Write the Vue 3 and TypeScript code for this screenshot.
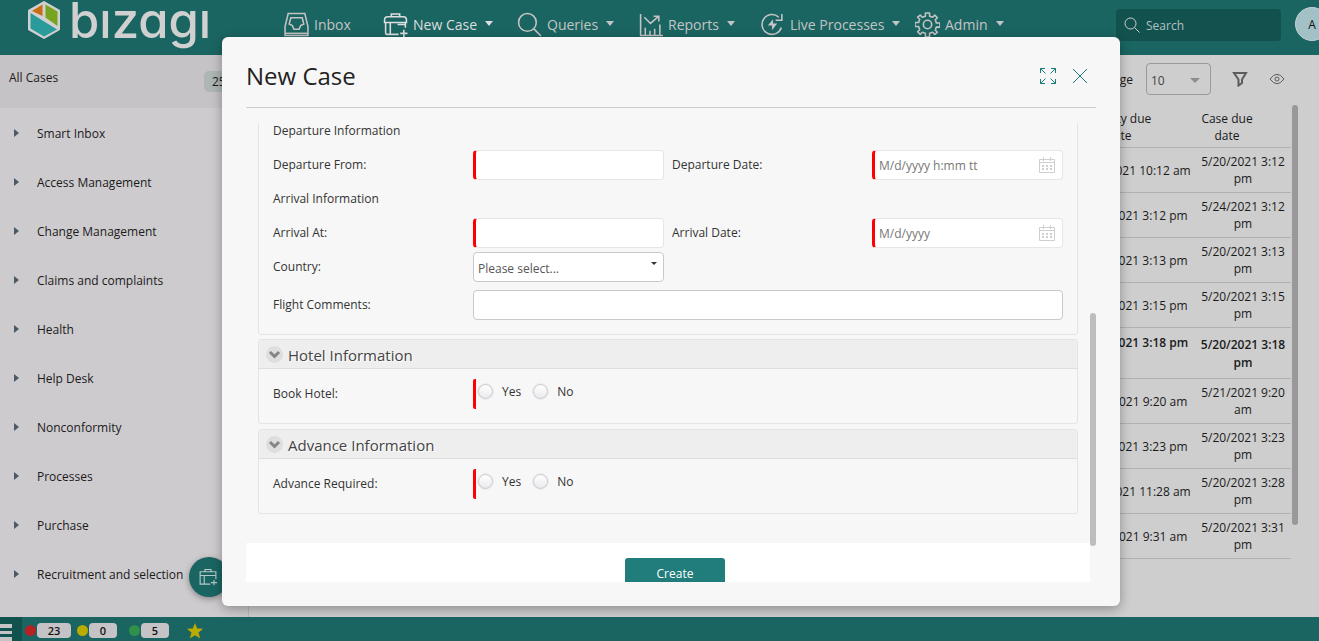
<script setup lang="ts">
import { ref } from 'vue'

interface NavItem { label: string; icon: string; menu: boolean; active?: boolean }
interface CaseRow { activity: string; date: string; strong?: boolean }

const nav: NavItem[] = [
  { label: 'Inbox', icon: 'inbox', menu: false },
  { label: 'New Case', icon: 'case', menu: true, active: true },
  { label: 'Queries', icon: 'search', menu: true },
  { label: 'Reports', icon: 'chart', menu: true },
  { label: 'Live Processes', icon: 'live', menu: true },
  { label: 'Admin', icon: 'gear', menu: true },
]

const categories = [
  'Smart Inbox', 'Access Management', 'Change Management', 'Claims and complaints', 'Health',
  'Help Desk', 'Nonconformity', 'Processes', 'Purchase', 'Recruitment and selection',
]

const rows: CaseRow[] = [
  { activity: '5/19/2021 10:12 am', date: '5/20/2021 3:12 pm' },
  { activity: '5/20/2021 3:12 pm', date: '5/24/2021 3:12 pm' },
  { activity: '5/20/2021 3:13 pm', date: '5/20/2021 3:13 pm' },
  { activity: '5/20/2021 3:15 pm', date: '5/20/2021 3:15 pm' },
  { activity: '5/20/2021 3:18 pm', date: '5/20/2021 3:18 pm', strong: true },
  { activity: '5/21/2021 9:20 am', date: '5/21/2021 9:20 am' },
  { activity: '5/20/2021 3:23 pm', date: '5/20/2021 3:23 pm' },
  { activity: '5/20/2021 11:28 am', date: '5/20/2021 3:28 pm' },
  { activity: '5/20/2021 9:31 am', date: '5/20/2021 3:31 pm' },
]

const counters = [
  { color: 'red', count: 23 },
  { color: 'yellow', count: 0 },
  { color: 'green', count: 5 },
]

const questions = [
  { title: 'Hotel Information', label: 'Book Hotel:', name: 'hotel' },
  { title: 'Advance Information', label: 'Advance Required:', name: 'advance' },
]

const answers = ref<Record<string, string>>({ hotel: '', advance: '' })
const departureFrom = ref('')
const departureDate = ref('')
const arrivalAt = ref('')
const arrivalDate = ref('')
const country = ref('')
const comments = ref('')
</script>

<template>
  <div class="page">
    <header class="topbar">
      <div class="brand">
        <svg class="brand-mark" viewBox="0 0 34 40" aria-hidden="true">
          <path d="M17 2 32 10.500V29.500L17 38 2 29.500V10.500Z" fill="#d0d0d0" stroke="#d0d0d0" stroke-width="2" stroke-linejoin="round" />
          <path d="M15.500 4.500V16L5 11Z" fill="#c96c13" />
          <path d="M18.500 4.500 30.500 11.500V26L18.500 17.500Z" fill="#76a41f" />
          <path d="M3.500 13 30 29.500 17 36.500 3.500 28.500Z" fill="#2a9a9b" />
        </svg>
        <span class="brand-name" aria-label="bizagi">bızagı</span>
      </div>
      <nav class="nav">
        <a v-for="item in nav" :key="item.label" href="#" class="nav-item" :class="{ active: item.active }">
          <svg class="nav-icon" viewBox="0 0 24 24" aria-hidden="true">
            <template v-if="item.icon === 'inbox'">
              <path d="M4 1.500h16l3 12.500v8.500H1V14Z" />
              <path d="M6.500 5.500h11l1.500 6-3 1.500-1.500 3.500h-5L8 13l-3-1.500Z" />
              <path d="M1 20.500h22" />
            </template>
            <template v-else-if="item.icon === 'case'">
              <path d="M15 21.500H3.500Q2.500 21.500 2.500 19.500V10M21.500 10v5M1.500 10h21V7.500Q22.500 4.500 19.500 4.500h-15Q1.500 4.500 1.500 7.500ZM7 10v11.500M8 4.500V2h8v2.500M14 12h7" />
              <path d="M20 17v7M16.500 20.500h7" />
            </template>
            <template v-else-if="item.icon === 'search'">
              <circle cx="10" cy="10" r="8.500" />
              <path d="m16 16 7 7" />
            </template>
            <template v-else-if="item.icon === 'chart'">
              <path d="M2.500 2v20.500H24M6 5l6 6 8-7M15 4h5v5M7 22v-7M11.500 22v-4M16 22v-6M21 22V12" />
            </template>
            <template v-else-if="item.icon === 'live'">
              <path d="M18 5A9.500 9.500 0 1 0 20.500 15M21 2v6h-6" />
              <path d="M12.500 7 7.500 13h4v4.500l5-6.500h-4Z" fill="currentColor" stroke="none" />
            </template>
            <template v-else>
              <circle cx="12" cy="12" r="4" />
              <path d="M10 1h4v3l3 1 2-2 2.500 2.500-2 2 1 3H24v4h-3.500l-1 3 2 2L19 21.500l-2-2-3 1V24h-4v-3.500l-3-1-2 2L2.500 19l2-2-1-3H0v-4h3.500l1-3-2-2L5 3l2 2 3-1Z" stroke-linejoin="round" />
            </template>
          </svg>
          <span>{{ item.label }}</span>
          <i v-if="item.menu" class="caret"></i>
        </a>
      </nav>
      <label class="search">
        <svg viewBox="0 0 16 16" aria-hidden="true"><circle cx="6.500" cy="6.500" r="5.500" /><path d="m10.500 10.500 5 5" /></svg>
        <input type="search" placeholder="Search" aria-label="Search" />
      </label>
      <button class="avatar" type="button">A</button>
    </header>

    <div class="content">
      <aside class="sidebar">
        <div class="sidebar-head"><span>All Cases</span><span class="badge">25</span></div>
        <ul class="categories">
          <li v-for="name in categories" :key="name"><a href="#"><i class="arrow"></i>{{ name }}</a></li>
        </ul>
      </aside>
      <main class="main">
        <div class="toolbar">
          <label for="page-size">Cases per page</label>
          <span class="size-box">
            <select id="page-size"><option>10</option></select>
            <i class="caret"></i>
          </span>
          <button class="tool" type="button" aria-label="Filter">
            <svg viewBox="0 0 16 16"><path d="M2 2h12L10 8.500V12l-3.500 2.500v-6Z" stroke-width="2" /></svg>
          </button>
          <button class="tool" type="button" aria-label="View">
            <svg viewBox="0 0 16 16"><path d="M1 8q7-9.500 14 0Q8 17.500 1 8Z" /><circle cx="8" cy="8" r="2" /></svg>
          </button>
        </div>
        <div class="table-wrap">
          <table class="cases">
            <thead><tr><th class="col-activity">Activity due date</th><th class="col-date">Case due date</th></tr></thead>
            <tbody>
              <tr v-for="row in rows" :key="row.date + row.activity" :class="{ strong: row.strong }">
                <td>{{ row.activity }}</td><td>{{ row.date }}</td>
              </tr>
            </tbody>
          </table>
          <div class="page-thumb"></div>
        </div>
      </main>
    </div>

    <footer class="status">
      <button class="menu" type="button" aria-label="Menu"><i></i><i></i><i></i></button>
      <span v-for="c in counters" :key="c.color" class="counter">
        <i class="dot" :class="c.color"></i><b>{{ c.count }}</b>
      </span>
      <svg class="star" viewBox="0 0 18 18" aria-hidden="true"><path d="m9 1 2.200 5.500 6 .3-4.700 3.700 1.700 6L9 13.300l-5.200 3.200 1.700-6L.8 6.800l6-.3Z" /></svg>
    </footer>

    <button class="fab" type="button" aria-label="New case">
      <svg viewBox="0 0 24 24"><path d="M15 21.500H1.500V5h21v10M1.500 10h21M7 10v11.500M8 5V2h8v3M20 16v7M16 19.500h8" /></svg>
    </button>

    <section class="dialog" role="dialog" aria-labelledby="dialog-title">
      <header class="dialog-head">
        <h1 id="dialog-title">New Case</h1>
        <button type="button" aria-label="Maximize">
          <svg viewBox="0 0 16 16"><path d="M.5 5V.5H5M.5.5l5 5M11 .5h4.500V5M15.500.5l-5 5M.5 11v4.500H5M.5 15.500l5-5M11 15.500h4.500V11M15.500 15.500l-5-5" /></svg>
        </button>
        <button type="button" aria-label="Close">
          <svg viewBox="0 0 16 16"><path d="m1 1 14 14M15 1 1 15" /></svg>
        </button>
      </header>
      <div class="dialog-body">
        <form class="form" @submit.prevent>
          <fieldset class="group flight">
            <h2 class="subtitle">Departure Information</h2>
            <div class="pair">
              <div class="field">
                <label for="dep-from">Departure From:</label>
                <input id="dep-from" v-model="departureFrom" class="box required" type="text" />
              </div>
              <div class="field">
                <label for="dep-date">Departure Date:</label>
                <span class="date">
                  <input id="dep-date" v-model="departureDate" class="box required" type="text" placeholder="M/d/yyyy h:mm tt" />
                  <svg viewBox="0 0 16 16"><path d="M.5 2.500h15v13H.5ZM.5 5.500h15M4.500 0v4M11.500 0v4" /><path d="M3 9h10M3 12h10" stroke-width="2" stroke-dasharray="2" /></svg>
                </span>
              </div>
            </div>
            <h2 class="subtitle">Arrival Information</h2>
            <div class="pair">
              <div class="field">
                <label for="arr-at">Arrival At:</label>
                <input id="arr-at" v-model="arrivalAt" class="box required" type="text" />
              </div>
              <div class="field">
                <label for="arr-date">Arrival Date:</label>
                <span class="date">
                  <input id="arr-date" v-model="arrivalDate" class="box required" type="text" placeholder="M/d/yyyy" />
                  <svg viewBox="0 0 16 16"><path d="M.5 2.500h15v13H.5ZM.5 5.500h15M4.500 0v4M11.500 0v4" /><path d="M3 9h10M3 12h10" stroke-width="2" stroke-dasharray="2" /></svg>
                </span>
              </div>
            </div>
            <div class="pair country">
              <div class="field">
                <label for="country">Country:</label>
                <span class="pick">
                  <select id="country" v-model="country" class="box"><option value="">Please select...</option></select>
                  <i></i>
                </span>
              </div>
            </div>
            <div class="field comments">
              <label for="comments">Flight Comments:</label>
              <input id="comments" v-model="comments" class="box" type="text" />
            </div>
          </fieldset>

          <section v-for="q in questions" :key="q.name" class="group">
            <h2 class="group-head">
              <svg viewBox="0 0 17 17" aria-hidden="true"><circle cx="8.500" cy="8.500" r="8.500" /><path d="m4 6 4.500 4.500L13 6" /></svg>
              {{ q.title }}
            </h2>
            <fieldset class="field question">
              <span class="question-label">{{ q.label }}</span>
              <div class="options" role="radiogroup" :aria-label="q.label">
                <label><input v-model="answers[q.name]" type="radio" :name="q.name" value="yes" />Yes</label>
                <label><input v-model="answers[q.name]" type="radio" :name="q.name" value="no" />No</label>
              </div>
            </fieldset>
          </section>

          <div class="actions"><button type="submit">Create</button></div>
        </form>
        <div class="form-thumb"></div>
      </div>
    </section>
  </div>
</template>

<style>
body { margin: 0; overflow: hidden; }
</style>

<style scoped>
* { box-sizing: border-box; }
.page {
  position: relative;
  display: flex;
  flex-direction: column;
  height: 100vh;
  overflow: hidden;
  background: #cecece;
  color: #1a1a1a;
  font: 12px/17px "Open Sans", "Noto Sans", sans-serif;
}
button, input, select { font: inherit; color: inherit; }
button { padding: 0; border: 0; background: none; cursor: pointer; }
a { color: inherit; text-decoration: none; }
fieldset { margin: 0; padding: 0; border: 0; min-width: 0; }
svg { fill: none; stroke: currentColor; }

.topbar { display: flex; align-items: flex-start; flex: none; height: 55px; background: #1a6562; color: #c4c4c4; }
.brand { display: flex; flex: none; width: 284px; height: 55px; padding-left: 27px; }
.brand-mark { width: 34px; height: 40px; stroke: none; }
.brand-name { margin-left: 8px; color: #d0d0d0; font: 500 49px/42px Inter, sans-serif; font-feature-settings: "cv11"; }
.nav { display: grid; grid-template-columns: 99px 134px 121px 122px 155px 1fr; flex: 1; padding-top: 11px; font-size: 14px; }
.nav-item { display: flex; align-items: center; height: 26px; white-space: nowrap; }
.nav-item.active { color: #dedede; }
.nav-icon { flex: none; width: 25px; height: 25px; margin-right: 5px; stroke-width: 1.5; }
.caret { flex: none; border: solid transparent; border-width: 5px 4px 0; border-top-color: currentColor; }
.nav .caret { margin: 0 0 2px 8px; }
.search { display: flex; align-items: center; flex: none; width: 165px; height: 32px; margin: 9px 14px 0 0; padding-left: 8px; border-radius: 4px; background: #11524f; }
.search svg { width: 16px; height: 16px; margin-right: 6px; color: #d0d0d0; }
.search input { flex: 1; min-width: 0; padding: 0; border: 0; outline: 0; background: none; }
.search input::placeholder { color: #b4c0c0; opacity: 1; }
.avatar { flex: none; width: 34px; height: 34px; margin: 7px -10px 0 0; border: 1px solid #c8d0d0; border-radius: 50%; background: #a2c1c7; color: #111; }

.content { display: flex; flex: 1; min-height: 0; }
.sidebar { flex: none; width: 249px; border-right: 1px solid #b8b6b8; background: #cecbce; overflow: hidden; }
.sidebar-head { display: flex; justify-content: space-between; align-items: center; height: 53px; padding: 0 8px 8px 9px; background: #c6c3c6; }
.badge { width: 36px; margin-top: 8px; padding: 2px 8px; border-radius: 5px; background: #adb5b5; }
.categories { margin: 0; padding: 0; list-style: none; }
.categories a { display: flex; align-items: center; height: 49px; padding: 1px 0 0 14px; white-space: nowrap; }
.arrow { margin-right: 18px; border: solid transparent; border-width: 4px 0 4px 5px; border-left-color: #4a5a68; }
.main { display: flex; flex-direction: column; align-items: flex-end; flex: 1; min-width: 0; padding-right: 21px; }
.toolbar { display: flex; align-items: center; height: 50px; padding: 0 13px 2px 0; }
.size-box { position: relative; margin: 0 21px 0 13px; }
.size-box select { display: block; width: 65px; height: 32px; padding: 2px 4px 0; border: 1px solid #9a9a9a; border-radius: 4px; background: none; color: #444; appearance: none; }
.size-box .caret { position: absolute; right: 11px; top: 15px; border-width: 5px 5px 0; color: #8d8d8d; pointer-events: none; }
.tool { width: 16px; height: 16px; margin-right: 21px; color: #5c5c5c; }
.tool:last-child { margin-right: 0; }
.tool svg { display: block; width: 16px; height: 16px; }
.table-wrap { display: flex; align-items: flex-start; }
.cases { border-collapse: collapse; table-layout: fixed; width: 216px; }
.cases th { height: 42px; padding: 5px 32px 3px 0; border-bottom: 1px solid #b1b1b1; font-weight: 400; }
.col-activity { width: 120px; }
.cases td { padding: 5px 0; border-bottom: 1px solid #b1b1b1; text-align: center; }
.cases td:first-child { white-space: nowrap; }
.cases td:last-child { padding: 5px 6px; }
.strong td { padding: 6px 0; font-weight: 600; line-height: 18px; vertical-align: top; }
.strong td:last-child { padding: 8px 5px 6px; }
.page-thumb { width: 6px; height: 420px; margin-left: 1px; border-radius: 3px; background: #9a989a; }

.status { display: flex; align-items: center; flex: none; height: 24px; background: #1a6562; }
.menu { display: flex; flex-direction: column; gap: 3px; width: 22px; height: 24px; margin-right: 3px; padding-top: 7px; background: #11524f; }
.menu i { width: 12px; height: 4px; background: #c6c3c6; }
.counter { display: flex; align-items: center; height: 17px; margin: 3px 6px 0 0; }
.dot { width: 11px; height: 11px; margin-right: 1px; border-radius: 50%; }
.red { background: #b52224; }
.yellow { background: #b9ab00; }
.green { background: #31904a; }
.counter b { min-width: 28px; height: 15px; padding: 0 8px; border-radius: 4px; background: #c6c3c6; color: #111; font-size: 11px; font-weight: 600; line-height: 15px; text-align: center; }
.counter:nth-of-type(1) b { min-width: 34px; }
.counter:nth-of-type(2) { margin-right: 12px; }
.star { width: 18px; height: 18px; margin: 3px 0 0 11px; fill: #b9ab00; stroke: none; }

.fab { position: absolute; left: 189px; bottom: 44px; display: grid; place-items: center; width: 40px; height: 40px; border-radius: 50%; background: #1a6562; box-shadow: 0 2px 6px rgb(0 0 0 / 35%); color: #b5c9c9; }
.fab svg { width: 18px; height: 18px; margin-right: 2px; stroke-width: 1.5; }

.dialog { position: absolute; inset: 37px 199px 35px 222px; display: flex; flex-direction: column; padding: 0 24px 24px; border-radius: 6px; background: #f7f7f7; box-shadow: 0 3px 12px rgb(0 0 0 / 32%); color: #333; }
.dialog-head { display: flex; align-items: center; flex: none; height: 71px; padding: 8px 8px 0 0; border-bottom: 1px solid #cecece; color: #1a7b78; }
.dialog-head h1 { flex: 1; margin: 0; color: #222; font-size: 24px; font-weight: 400; line-height: 30px; }
.dialog-head button { margin-left: 16px; }
.dialog-head svg { display: block; width: 16px; height: 16px; }
.dialog-body { position: relative; flex: 1; min-height: 0; margin-top: 15px; overflow: hidden; }
.form { margin-right: 6px; }
.group { margin: 0 12px 5px; border: 1px solid #e4e4e4; border-radius: 3px; }
.flight { margin-top: -12px; margin-bottom: 4px; padding: 0 14px 14px; }
.subtitle { margin: 11px 0; font-size: 12px; font-weight: 500; line-height: 16px; }
.pair { display: grid; grid-template-columns: 1fr 1fr; gap: 8px; }
.field { display: grid; grid-template-columns: 200px 1fr; align-items: center; font-weight: 500; }
.field > label, .question-label { padding-bottom: 2px; }
.box { display: block; width: 100%; height: 30px; padding: 1px 4px 0; border: 1px solid #e6e6ea; border-radius: 4px; outline: 0; background: #fff; color: #666; font-weight: 400; }
.box.required { border-left: 3px solid #f00; }
.box::placeholder { color: #777; opacity: 1; }
.date, .pick { position: relative; }
.date svg { position: absolute; top: 7px; right: 8px; width: 16px; height: 16px; color: #cfcfcf; pointer-events: none; }
.country { margin: 4px 0 8px; }
.country .box, .comments .box { border-color: #c6cacc; }
.pick select { padding-top: 2px; appearance: none; color: #555; }
.pick i { position: absolute; top: 10px; right: 7px; border: solid transparent; border-width: 3px 3px 0; border-top-color: #333; pointer-events: none; }
.group-head { display: flex; align-items: center; height: 29px; margin: 0; padding: 2px 0 0 7px; border-bottom: 1px solid #dedede; background: #eee; color: #444; font-size: 15px; font-weight: 400; text-shadow: 1px 1px #fff; }
.group-head svg { width: 17px; height: 17px; margin: 0 5px 2px 0; }
.group-head circle { fill: #dedede; stroke: none; }
.group-head path { stroke: #848484; stroke-width: 3; }
.question { padding: 10px 14px 14px; }
.options { display: flex; gap: 10px; height: 30px; padding-top: 3px; border-left: 3px solid #f00; border-radius: 2px; font-weight: 400; }
.options label { display: flex; align-items: center; height: 18px; }
.options input { width: 15px; height: 15px; margin: 0 9px 0 2px; border: 1px solid #c6c3c8; border-radius: 50%; outline: 1px solid #eeeaee; background: linear-gradient(#fff, #eaeaee); appearance: none; }
.options input:checked { background: radial-gradient(#1a7b78 40%, #fff 45%); }
.actions { display: flex; justify-content: center; margin-top: 29px; padding: 15px 0; background: #fff; }
.actions button { width: 100px; height: 30px; margin-left: 14px; border-radius: 3px; background: #217d7b; color: #fff; }
.form-thumb { position: absolute; top: 190px; right: 0; width: 6px; height: 233px; border-radius: 3px; background: #bdbdbd; }
</style>
